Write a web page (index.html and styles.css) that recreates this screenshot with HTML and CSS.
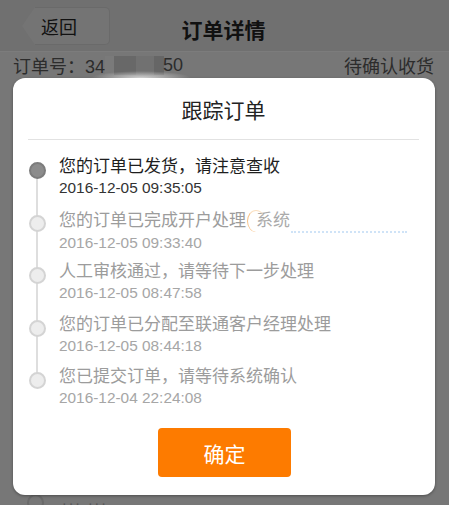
FILE: index.html
```html
<!DOCTYPE html>
<html lang="zh-CN">
<head>
<meta charset="utf-8">
<title>订单详情</title>
<link rel="stylesheet" href="styles.css">
</head>
<body>
<div class="page">
  <header class="nav">
    <div class="back"><span class="back-arrow"></span><span class="back-box">返回</span></div>
    <h1 class="nav-title">订单详情</h1>
    <div class="nav-spacer"></div>
  </header>
  <div class="order-row">
    <span class="order-no">订单号：34<span class="masked"></span>50</span>
    <span class="order-status">待确认收货</span>
  </div>
  <div class="behind">
    <span class="behind-dot"></span><span class="behind-text">··· ···</span>
  </div>

  <div class="modal">
    <div class="modal-head"><h2 class="modal-title">跟踪订单</h2></div>
    <ul class="track">
      <li class="step current">
        <span class="dot"></span>
        <div class="step-body">
          <div class="step-title">您的订单已发货，请注意查收</div>
          <div class="step-time">2016-12-05 09:35:05</div>
        </div>
      </li>
      <li class="step">
        <span class="dot"></span>
        <div class="step-body">
          <div class="step-title"><span>您的订单已完成开户处理</span><span class="glitch"><span class="arc"></span>系统</span><span class="dots-line"></span></div>
          <div class="step-time">2016-12-05 09:33:40</div>
        </div>
      </li>
      <li class="step">
        <span class="dot"></span>
        <div class="step-body">
          <div class="step-title">人工审核通过，请等待下一步处理</div>
          <div class="step-time">2016-12-05 08:47:58</div>
        </div>
      </li>
      <li class="step">
        <span class="dot"></span>
        <div class="step-body">
          <div class="step-title">您的订单已分配至联通客户经理处理</div>
          <div class="step-time">2016-12-05 08:44:18</div>
        </div>
      </li>
      <li class="step">
        <span class="dot"></span>
        <div class="step-body">
          <div class="step-title">您已提交订单，请等待系统确认</div>
          <div class="step-time">2016-12-04 22:24:08</div>
        </div>
      </li>
    </ul>
    <div class="modal-foot"><button class="ok">确定</button></div>
  </div>
</div>
</body>
</html>
```
FILE: styles.css
```css
* { box-sizing: border-box; }
html, body { margin: 0; padding: 0; }
body {
  width: 449px;
  height: 505px;
  overflow: hidden;
  background: #777777;
  font-family: "Liberation Sans", "Noto Sans CJK SC", sans-serif;
}
.page {
  position: relative;
  width: 449px;
  height: 505px;
}
.nav {
  height: 52px;
  background: #707070;
  border-bottom: 1px solid #7c7c7c;
  display: flex;
  align-items: center;
  padding: 0 0 0 22px;
}
.back {
  display: flex;
  align-items: center;
  height: 38px;
  width: 88px;
  margin-top: 1px;
}
.back-arrow {
  width: 0; height: 0;
  border-top: 19px solid transparent;
  border-bottom: 19px solid transparent;
  border-right: 13px solid #747474;
}
.back-box {
  flex: 1;
  height: 38px;
  background: #747474;
  border: 1px solid #6a6a6a;
  border-left: none;
  border-radius: 0 5px 5px 0;
  display: flex;
  align-items: center;
  padding-left: 6px;
  font-size: 18px;
  color: #111;
}
.nav-title {
  flex: 1;
  margin: 6px 0 0 -2px;
  text-align: center;
  font-size: 21px;
  font-weight: bold;
  color: #111;
}
.nav-spacer { width: 110px; }
.order-row {
  display: flex;
  justify-content: space-between;
  align-items: center;
  padding: 0 15px 0 13px;
  height: 26px;
  font-size: 18px;
  color: #2c2c2c;
}
.order-no { display: flex; align-items: center; }
.masked {
  display: inline-block;
  width: 59px;
  height: 19px;
  margin-right: -1px;
  background: linear-gradient(90deg, #7a7a7a 0 15%, #686868 15% 53%, #717171 53% 83%, #666666 83% 100%);
}
.behind {
  position: absolute;
  left: 27px;
  top: 494px;
  display: flex;
  align-items: center;
  gap: 18px;
  color: #555;
}
.behind-dot {
  width: 17px; height: 17px;
  border-radius: 50%;
  border: 2px solid #6a6a6a;
}
.behind-text { font-size: 14px; letter-spacing: 2px; }

.modal {
  position: absolute;
  left: 13px;
  top: 78px;
  width: 422px;
  height: 417px;
  background: #fff;
  border-radius: 12px;
  box-shadow: 0 1px 3px rgba(0,0,0,0.35);
  display: flex;
  flex-direction: column;
}
.modal::before {
  content: "";
  position: absolute;
  left: 78px;
  top: -7px;
  width: 100px;
  height: 7px;
  background: radial-gradient(ellipse 50% 100% at 50% 100%, rgba(220,220,220,0.9), rgba(200,200,200,0) 100%);
}
.modal-head {
  height: 62px;
  margin: 0 16px 0 15px;
  border-bottom: 1px solid #e2e2e2;
  display: flex;
  align-items: center;
  justify-content: center;
}
.modal-title {
  margin: 0;
  font-size: 21px;
  font-weight: normal;
  color: #222;
}
.track {
  list-style: none;
  margin: 0;
  padding: 16px 0 0 0;
  position: relative;
}
.track::before {
  content: "";
  position: absolute;
  left: 23px;
  top: 31px;
  width: 2px;
  height: 210px;
  background: #dedede;
}
.step {
  display: flex;
  align-items: flex-start;
  height: 52.5px;
}
.dot {
  position: relative;
  width: 17px;
  height: 17px;
  margin: 6px 13px 0 16px;
  border-radius: 50%;
  background: #ededed;
  border: 2px solid #d4d4d4;
  flex: none;
}
.current .dot {
  background: #8c8c8c;
  border-color: #7c7c7c;
}
.step-title {
  font-size: 17px;
  line-height: 22px;
  color: #9c9c9c;
  white-space: nowrap;
  display: flex;
  align-items: center;
}
.step-time {
  font-size: 15.4px;
  line-height: 20px;
  color: #a6a6a6;
}
.current .step-title { color: #1e1e1e; }
.current .step-time { color: #333; }
.glitch {
  position: relative;
  display: inline-block;
  width: 45px;
  overflow: hidden;
  padding-left: 10px;
  color: #aaa;
}
.arc {
  position: absolute;
  left: 1px;
  top: 0px;
  width: 18px;
  height: 22px;
  border-radius: 50%;
  border-left: 1px solid #f8c48a;
  border-top: 1px solid #fbe0c0;
}
.dots-line {
  display: inline-block;
  width: 116px;
  height: 2px;
  margin: 22px 0 0 0;
  border-top: 2px dotted #cfe3f7;
}
.modal-foot {
  margin-top: auto;
  padding-bottom: 18px;
  display: flex;
  justify-content: center;
}
.ok {
  width: 133px;
  height: 49px;
  border: none;
  border-radius: 4px;
  background: #fd7b00;
  color: #fff;
  font-family: "Noto Sans CJK SC", sans-serif;
  font-size: 21px;
  margin-left: 1px;
}
```
